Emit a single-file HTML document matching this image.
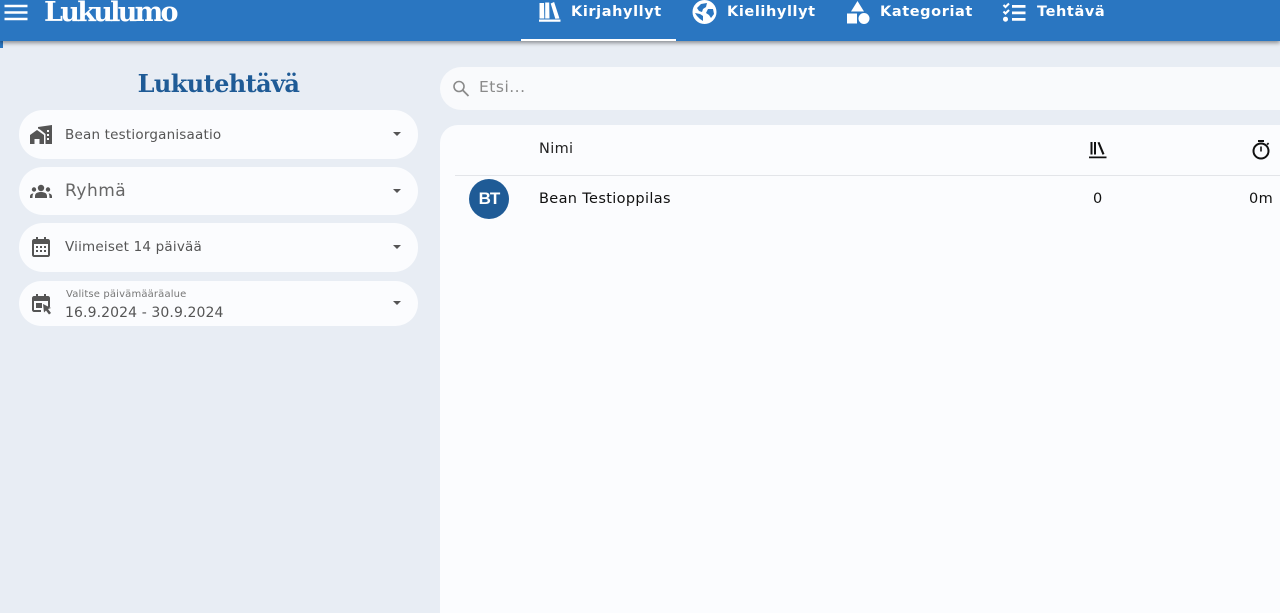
<!DOCTYPE html>
<html lang="fi">
<head>
<meta charset="utf-8">
<title>Lukutehtävä</title>
<style>
html,body{margin:0;padding:0;width:1280px;height:613px;overflow:hidden;background:#e8edf4;font-family:"DejaVu Sans","Liberation Sans",sans-serif;}
#page{position:absolute;left:0;top:0;width:1280px;height:613px;overflow:hidden;background:#e8edf4;}
.a{position:absolute;white-space:nowrap;}
#bar{position:absolute;left:0;top:0;width:1280px;height:41px;background:#2a76c1;box-shadow:0 2px 4px rgba(0,0,0,.4);z-index:3;}
#nub{position:absolute;left:0;top:41px;width:3px;height:7px;background:#2a76c1;z-index:2;}
.nav{position:absolute;top:3px;color:#fff;font-size:14.5px;line-height:18px;font-weight:bold;letter-spacing:.6px;white-space:nowrap;}
.sel{position:absolute;left:19px;width:399px;background:#fbfcfe;border-radius:24px;}
.tri{position:absolute;left:373.500px;width:0;height:0;border-left:4.500px solid transparent;border-right:4.500px solid transparent;border-top:4.500px solid #555;}
.txt{position:absolute;left:46px;color:#555;font-size:13.5px;letter-spacing:.2px;white-space:nowrap;}
.row{color:#111;font-size:14.5px;line-height:18px;letter-spacing:.35px;}
svg{position:absolute;display:block;}
</style>
</head>
<body>
<div id="page">
<div id="bar">
  <svg style="left:4px;top:3px" width="24" height="18" viewBox="0 0 24 18"><path d="M0.500 1.700h23v2.500H0.500zM0.500 8.300h23v2.500H0.500zM0.500 14.800h23v2.500H0.500z" fill="#fff"/></svg>
  <div class="a" style="left:44px;top:-4px;color:#fff;font:bold 27px/34px 'DejaVu Serif',serif;letter-spacing:-2.700px;">Lukulumo</div>

  <svg style="left:538px;top:0" width="24" height="23" viewBox="0 0 24 23"><path d="M1.500 3h4.500l.3 15.500H1.500zM7.200 2.500h4l.3 16H7.200zM12.700 3.500l3.400-1.500 5.400 16.500-4.200.3zM1 19.500h21.500v2.200H1z" fill="#fff"/></svg>
  <div class="nav" style="left:571px;">Kirjahyllyt</div>
  <div class="a" style="left:521px;top:39px;width:155px;height:2px;background:#fff;"></div>

  <svg style="left:692px;top:0" width="25" height="24" viewBox="0 0 25 24"><circle cx="12.500" cy="12" r="12" fill="#fff"/><path d="M5 8l4-4 6-1-1 4-3 2-1 3-3-1zM3 13l5 1 3 2 0 5-3-2-3-3zM16 9l5 0 1 5-3 4-2-3-3-2z" fill="#2a76c1"/></svg>
  <div class="nav" style="left:727px;">Kielihyllyt</div>

  <svg style="left:846px;top:0" width="24" height="24" viewBox="0 0 24 24"><path d="M11.500 1l6.500 10.500H5zM1 13.500h10v10H1z" fill="#fff"/><circle cx="18" cy="18.500" r="5.500" fill="#fff"/></svg>
  <div class="nav" style="left:880px;">Kategoriat</div>

  <svg style="left:1002px;top:2px" width="25" height="20" viewBox="0 0 25 20"><path d="M10 3h13.500v2.800H10zM10 9.500h13.500v2.800H10zM10 16h13.500v2.800H10z" fill="#fff"/><path d="M1.500 3l2 2 3.500-3.500M1.500 9.500l2 2 3.500-3.500" fill="none" stroke="#fff" stroke-width="2.100"/><circle cx="3.500" cy="17.200" r="2.500" fill="#fff"/></svg>
  <div class="nav" style="left:1037px;">Tehtävä</div>
</div>
<div id="nub"></div>

<div class="a" style="left:0;width:437px;top:67px;text-align:center;color:#1f5b96;font:bold 24px/34px 'DejaVu Serif',serif;letter-spacing:-.6px;">Lukutehtävä</div>

<div class="sel" style="top:110px;height:49px;">
  <svg style="left:11px;top:15px" width="22" height="19" viewBox="0 0 22 19"><path d="M0 10l7-5 7 5v9H9.500v-5h-5v5H0z" fill="#555"/><path d="M8 3.500V2L22 0v19h-6.500V9L10 4.500z" fill="#555"/><path d="M17 5h2v2h-2zM17 9h2v2h-2zM17 13h2v2h-2z" fill="#fbfcfe"/></svg>
  <div class="txt" style="top:17px;">Bean testiorganisaatio</div>
  <div class="tri" style="top:22px;"></div>
</div>
<div class="sel" style="top:167px;height:48px;">
  <svg style="left:11px;top:17px" width="22" height="15" viewBox="0 0 22 15"><circle cx="11" cy="4" r="3.200" fill="#555"/><circle cx="4" cy="5.500" r="2.200" fill="#555"/><circle cx="18" cy="5.500" r="2.200" fill="#555"/><path d="M5 14v-2c0-3 3-4 6-4s6 1 6 4v2zM0 14v-1.500c0-2 1.500-3 3.500-3-.8 1-1 2-1 4.500zM22 14v-1.500c0-2-1.500-3-3.500-3 .8 1 1 2 1 4.500z" fill="#555"/></svg>
  <div class="txt" style="top:14px;font-size:17px;color:#666;letter-spacing:.5px;">Ryhmä</div>
  <div class="tri" style="top:22px;"></div>
</div>
<div class="sel" style="top:223px;height:49px;">
  <svg style="left:13px;top:14px" width="18" height="20" viewBox="0 0 18 20"><path d="M4 0h2v2h6V0h2v2h2c1 0 2 1 2 2v14c0 1-1 2-2 2H2c-1 0-2-1-2-2V4c0-1 1-2 2-2h2zM2 7v11h14V7z" fill="#555"/><path d="M4 9h2v2H4zM8 9h2v2H8zM12 9h2v2h-2zM4 13h2v2H4zM8 13h2v2H8zM12 13h2v2h-2z" fill="#555"/></svg>
  <div class="txt" style="top:16px;">Viimeiset 14 päivää</div>
  <div class="tri" style="top:22px;"></div>
</div>
<div class="sel" style="top:281px;height:45px;border-radius:23px;">
  <svg style="left:13px;top:13px" width="20" height="21" viewBox="0 0 20 21"><path d="M4 0h2v2h6V0h2v2h2c1 0 2 1 2 2v9h-2V7H2v9h7v2H2c-1 0-2-1-2-2V4c0-1 1-2 2-2h2z" fill="#555"/><path d="M4 9h6v5H4z" fill="#555"/><path d="M11 10l8 4-3 1 3 4-2 1.500-3-4-2 2z" fill="#555"/></svg>
  <div class="txt" style="left:47px;top:7px;font-size:10px;color:#777;letter-spacing:.15px;line-height:13px;">Valitse päivämääräalue</div>
  <div class="txt" style="top:24px;font-size:14px;letter-spacing:.1px;">16.9.2024 - 30.9.2024</div>
  <div class="tri" style="top:20px;"></div>
</div>

<div class="a" style="left:440px;top:67px;width:860px;height:43px;background:#f9fafc;border-radius:22px;"></div>
<svg style="left:452px;top:80px" width="18" height="17" viewBox="0 0 18 17"><circle cx="7" cy="6.500" r="5" fill="none" stroke="#8a8a8a" stroke-width="1.600"/><path d="M10.800 10.300l5.700 5.700" stroke="#8a8a8a" stroke-width="1.800"/></svg>
<div class="a" style="left:479px;top:78px;color:#8a8a8a;font-size:15.5px;line-height:19px;letter-spacing:.5px;">Etsi...</div>

<div class="a" style="left:440px;top:125px;width:840px;height:488px;background:#fbfcfe;border-radius:18px 0 0 0;"></div>
<div class="a" style="left:455px;top:175px;width:825px;height:1px;background:#e3e5e9;"></div>
<div class="a row" style="left:539px;top:140px;color:#222;">Nimi</div>
<svg style="left:1089px;top:141px" width="18" height="18" viewBox="0 0 18 18"><path d="M1.500 1h2v12.500h-2zM5 1h2v12.500H5zM8.500 1.500l2-.5 5 12-2 .8zM0 15.500h17.500v1.700H0z" fill="#111"/></svg>
<svg style="left:1251px;top:139px" width="20" height="21" viewBox="0 0 20 21"><path d="M7 1h6v2H7z" fill="#111"/><circle cx="10" cy="12" r="7.500" fill="none" stroke="#111" stroke-width="2"/><path d="M9.200 7.500h1.600v5H9.200z" fill="#111"/><path d="M15.500 5l1.500-1.500 1.200 1.200-1.500 1.500z" fill="#111"/></svg>

<div class="a" style="left:469px;top:179px;width:40px;height:40px;border-radius:50%;background:#1f5b96;color:#fff;text-align:center;font:bold 17px/39px 'Liberation Sans',sans-serif;letter-spacing:-1px;">BT</div>
<div class="a row" style="left:539px;top:190px;">Bean Testioppilas</div>
<div class="a row" style="left:1093px;top:190px;">0</div>
<div class="a row" style="left:1249px;top:190px;">0m</div>
</div>
</body>
</html>
